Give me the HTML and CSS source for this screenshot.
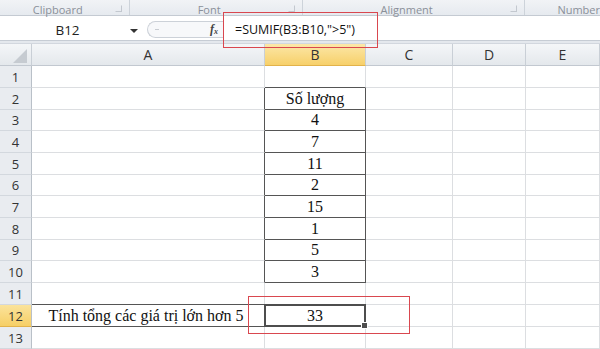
FILE: index.html
```html
<!DOCTYPE html>
<html lang="vi">
<head>
<meta charset="UTF-8" />
<title>SUMIF</title>
<link rel="stylesheet" href="styles.css">
</head>
<body>

<div class="ribbon">
  <div class="group g-clip"><span>Clipboard</span><i class="launcher"></i></div>
  <div class="group g-font"><span>Font</span><i class="launcher"></i></div>
  <div class="group g-align"><span>Alignment</span><i class="launcher"></i></div>
  <div class="group g-num"><span>Number</span></div>
</div>

<div class="fbar">
  <div class="namebox"><span>B12</span><i class="caret"></i></div>
  <div class="pill"><i class="grip"></i><em>f<sub>x</sub></em></div>
  <div class="formula">=SUMIF(B3:B10,"&gt;5")</div>
</div>
<div class="fbar-gap"></div>

<div class="sheet">
  <div class="hd corner"></div>
  <div class="hd col">A</div>
  <div class="hd col sel">B</div>
  <div class="hd col">C</div>
  <div class="hd col">D</div>
  <div class="hd col">E</div>

  <div class="hd row">1</div><div class="c a"></div><div class="c b top"></div><div class="c"></div><div class="c"></div><div class="c"></div>
  <div class="hd row">2</div><div class="c a edge"></div><div class="c b box">Số lượng</div><div class="c"></div><div class="c"></div><div class="c"></div>
  <div class="hd row">3</div><div class="c a edge"></div><div class="c b box">4</div><div class="c"></div><div class="c"></div><div class="c"></div>
  <div class="hd row">4</div><div class="c a edge"></div><div class="c b box">7</div><div class="c"></div><div class="c"></div><div class="c"></div>
  <div class="hd row">5</div><div class="c a edge"></div><div class="c b box">11</div><div class="c"></div><div class="c"></div><div class="c"></div>
  <div class="hd row">6</div><div class="c a edge"></div><div class="c b box">2</div><div class="c"></div><div class="c"></div><div class="c"></div>
  <div class="hd row">7</div><div class="c a edge"></div><div class="c b box">15</div><div class="c"></div><div class="c"></div><div class="c"></div>
  <div class="hd row">8</div><div class="c a edge"></div><div class="c b box">1</div><div class="c"></div><div class="c"></div><div class="c"></div>
  <div class="hd row">9</div><div class="c a edge"></div><div class="c b box">5</div><div class="c"></div><div class="c"></div><div class="c"></div>
  <div class="hd row">10</div><div class="c a edge"></div><div class="c b box">3</div><div class="c"></div><div class="c"></div><div class="c"></div>
  <div class="hd row">11</div><div class="c a top"></div><div class="c b top"></div><div class="c"></div><div class="c"></div><div class="c"></div>
  <div class="hd row sel">12</div><div class="c a label">Tính tổng các giá trị lớn hơn 5</div><div class="c b active">33</div><div class="c"></div><div class="c"></div><div class="c"></div>
  <div class="hd row">13</div><div class="c a"></div><div class="c b"></div><div class="c"></div><div class="c"></div><div class="c"></div>
</div>

<div class="mark mark-formula"></div>
<div class="mark mark-result"></div>

</body>
</html>
```

FILE: styles.css
```css
/* Base */
body, html {
  margin: 0; padding: 0;
  width: 600px; height: 349px;
  overflow: hidden;
  background: #fff;
  font-family: "Open Sans", "Liberation Sans", sans-serif;
  color: #333;
}
body { position: relative; }

/* Ribbon group labels */
.ribbon {
  display: flex;
  height: 15px;
  background: linear-gradient(#f1f3f6, #e6eaef);
  border-bottom: 1px solid #c4cad2;
}
.group {
  display: flex;
  align-items: center;
  box-sizing: border-box;
  border-right: 1px solid #cdd3da;
  font-size: 11px;
  color: #8a9099;
  line-height: 1;
}
.group span { flex: 1; text-align: center; margin-top: 3px; }
.g-clip { width: 133px; }
.g-font { width: 176px; }
.g-align { width: 227px; }
.g-num { flex: 1; border-right: 0; padding-left: 32px; white-space: nowrap; }
.g-num span { text-align: left; }
.launcher {
  width: 5px; height: 5px;
  margin: 2px 7px 0 0;
  border: 1px solid #c3c8cf;
  border-left-color: transparent;
  border-top-color: transparent;
}

/* Formula bar */
.fbar {
  display: flex;
  height: 24px;
  border-bottom: 1px solid #c6ccd4;
  background: #fff;
}
.namebox {
  width: 145px;
  display: flex;
  align-items: center;
  padding-top: 3px;
  box-sizing: border-box;
  font-size: 13.5px;
  color: #222;
}
.namebox span { flex: 1; text-align: center; padding-left: 5px; }
.caret {
  width: 0; height: 0;
  margin: 2px 7px 0 0;
  border-left: 4px solid transparent;
  border-right: 4px solid transparent;
  border-top: 4px solid #333;
}
.pill {
  width: 76px;
  margin: 5px 0 2px 2px;
  box-sizing: border-box;
  border: 1px solid #ccd1d8;
  border-right: 0;
  border-radius: 9px 0 0 9px;
  background: #f7f8fa;
  display: flex;
  align-items: center;
  justify-content: space-between;
  padding: 0 5px 0 7px;
}
.grip { width: 4px; height: 1px; background: #c8ccd2; }
.pill em {
  font-family: "Liberation Serif", serif;
  font-size: 12px;
  font-weight: bold;
  color: #444;
}
.pill sub { font-size: 8px; vertical-align: -1px; }
.formula {
  flex: 1;
  display: flex;
  align-items: center;
  padding: 3px 0 0 11px;
  border-left: 1px solid #c6ccd4;
  font-size: 12.5px;
  color: #111;
}
.fbar-gap { height: 2px; background: #e4e8ed; border-bottom: 1px solid #d2d7de; }

/* Sheet grid */
.sheet {
  display: grid;
  grid-template-columns: 32px 233px 101px 87px 73px 1fr;
  grid-template-rows: 22px 22px 22px 21px 22px 22px 21px 22px 22px 21px 22px 22px 22px 22px;
}
.hd {
  box-sizing: border-box;
  display: flex;
  align-items: center;
  justify-content: center;
  font-size: 13px;
  color: #333;
  background: linear-gradient(#f4f6f8, #e4e8ec);
  border-right: 1px solid #c9cfd6;
  border-bottom: 1px solid #c2c8d0;
}
.hd.col { font-size: 14px; }
.hd.row {
  background: #e9ecf0;
  border-right: 1px solid #b9c0c8;
  border-bottom: 1px solid #d3d8de;
}
.hd.sel {
  background: linear-gradient(#fce7a8, #f7d06a);
  border-bottom-color: #e2b24a;
}
.hd.row.sel { background: linear-gradient(#fbe39b, #f6cf66); }
.corner { position: relative; }
.corner::after {
  content: "";
  position: absolute;
  right: 4px; bottom: 2px;
  border-left: 14px solid transparent;
  border-bottom: 14px solid #c6cbd1;
}

.c {
  box-sizing: border-box;
  border-right: 1px solid #dcdee1;
  border-bottom: 1px solid #dcdee1;
  display: flex;
  align-items: center;
  justify-content: center;
  font-family: "Liberation Serif", "Times New Roman", serif;
  font-size: 16px;
  color: #111;
}
.c.top { border-bottom-color: #555; }
.c.edge { border-right-color: #555; }
.c.box { border-right-color: #555; border-bottom-color: #555; }
.c.label { border-bottom-color: #555; border-right-color: #555; padding-right: 4px; }
.c.active { position: relative; border-bottom-color: #555; }
.c.active::after {
  content: "";
  position: absolute;
  left: -1px; top: -1px; right: -1px; bottom: -1px;
  border: 2px solid #4e4e4e;
}
.c.active::before {
  content: "";
  position: absolute;
  right: -3px; bottom: -3px;
  width: 5px; height: 5px;
  background: #4e4e4e;
  border: 1px solid #fff;
  z-index: 1;
}

/* Red annotation boxes */
.mark {
  position: absolute;
  border: 1px solid #d9474f;
  pointer-events: none;
}
.mark-formula { left: 223px; top: 12px; width: 153px; height: 34px; }
.mark-result { left: 248px; top: 296px; width: 160px; height: 36px; }
```
